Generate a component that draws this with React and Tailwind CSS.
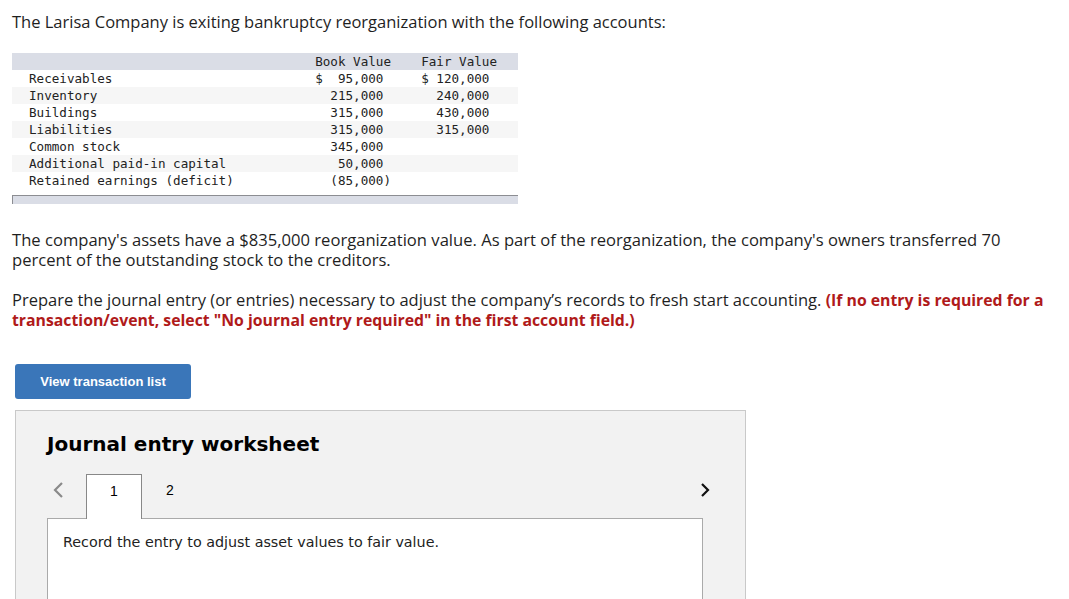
import React from "react";

const rows = [
  { label: "Receivables", book: "$  95,000 ", fair: "$ 120,000 " },
  { label: "Inventory", book: "215,000 ", fair: "240,000 " },
  { label: "Buildings", book: "315,000 ", fair: "430,000 " },
  { label: "Liabilities", book: "315,000 ", fair: "315,000 " },
  { label: "Common stock", book: "345,000 ", fair: "" },
  { label: "Additional paid-in capital", book: "50,000 ", fair: "" },
  { label: "Retained earnings (deficit)", book: "(85,000)", fair: "" },
];

const mono = { fontFamily: '"DejaVu Sans Mono", "Liberation Mono", monospace' };

export default function App() {
  return (
    <div
      className="w-[1069px] h-[599px] overflow-hidden bg-white text-[#222]"
      style={{ fontFamily: '"Open Sans", Lato, sans-serif' }}
    >
      <div className="pl-3 pt-[12px]">
        <p className="text-[16.5px] leading-[20px] text-[#1f1f1f] whitespace-nowrap">
          The Larisa Company is exiting bankruptcy reorganization with the following accounts:
        </p>

        {/* Table */}
        <div className="mt-[21px] w-[506px] text-[12.6px] text-[#222]" style={mono}>
          <div className="h-[17px] bg-[#dadde6] grid grid-cols-[288px_91px_106px] items-center leading-[17px]">
            <span />
            <span className="text-right whitespace-pre">Book Value</span>
            <span className="text-right whitespace-pre">Fair Value</span>
          </div>
          {rows.map((r, i) => (
            <div
              key={r.label}
              className={`h-[17px] grid grid-cols-[288px_91px_106px] items-center leading-[17px] ${
                i % 2 === 1 ? "bg-[#f6f6f6]" : "bg-white"
              }`}
            >
              <span className="pl-[17px] whitespace-pre">{r.label}</span>
              <span className="text-right whitespace-pre">{r.book}</span>
              <span className="text-right whitespace-pre">{r.fair}</span>
            </div>
          ))}
          <div className="mt-[6px] h-[9px] bg-[#dadde6] border-t border-l border-[#8c8d92]" />
        </div>

        <div className="mt-[26px] w-[1050px] text-[16.6px] leading-[20px] text-[#1f1f1f] whitespace-nowrap">
          <div className="h-[20px]">
            The company's assets have a $835,000 reorganization value. As part of the reorganization, the company's owners transferred 70
          </div>
          <div className="h-[20px]">percent of the outstanding stock to the creditors.</div>
        </div>
        <div className="mt-[20px] w-[1050px] text-[16.5px] leading-[20px] text-[#1f1f1f] whitespace-nowrap">
          <div className="h-[20px]">
            Prepare the journal entry (or entries) necessary to adjust the company’s records to fresh start accounting.{" "}
            <b className="text-[#b01a1a] font-bold text-[15.8px]">(If no entry is required for a</b>
          </div>
          <div className="h-[20px]">
            <b className="text-[#b01a1a] font-bold text-[15.8px]">
              transaction/event, select "No journal entry required" in the first account field.)
            </b>
          </div>
        </div>
      </div>

      <div className="pl-[15px]">
        <button
          className="mt-[34px] w-[176px] h-[35px] rounded-[3px] bg-[#3a76b9] text-white text-[13px] font-bold"
          style={{ fontFamily: '"Liberation Sans", Arial, sans-serif' }}
        >
          View transaction list
        </button>

        <div
          className="mt-[11px] w-[731px] h-[200px] bg-[#f2f2f2] border border-[#c9c9c9] pl-[31px] pr-[42px]"
          style={{ fontFamily: '"DejaVu Sans", Verdana, sans-serif' }}
        >
          <h2 className="mt-[20px] text-[20px] leading-[26px] font-bold text-black">Journal entry worksheet</h2>
          <div className="mt-[16px] flex items-end h-[45px]">
            <div className="w-[39px] h-[44px] flex items-start pt-[7px] pl-[5px]">
              <svg width="12" height="18" viewBox="0 0 12 18">
                <path d="M10 2 L3 9 L10 16" fill="none" stroke="#8a8a8a" strokeWidth="2.2" />
              </svg>
            </div>
            <div
              className="w-[56px] h-[45px] bg-white border border-b-0 border-[#888] flex justify-center pt-[7px] text-[14px] leading-[18px] text-black relative z-10 -mb-px"
              style={{ fontFamily: '"Liberation Sans", Arial, sans-serif' }}
            >
              1
            </div>
            <div
              className="w-[56px] h-[44px] flex justify-center pt-[7px] text-[14px] leading-[18px] text-black"
              style={{ fontFamily: '"Liberation Sans", Arial, sans-serif' }}
            >
              2
            </div>
            <div className="flex-1 h-[44px] flex items-start pt-[7px] justify-end -mr-[8px]">
              <svg width="12" height="18" viewBox="0 0 12 18">
                <path d="M3 3 L9 9 L3 15" fill="none" stroke="#111" strokeWidth="2.2" />
              </svg>
            </div>
          </div>
          <div className="h-[120px] bg-white border border-[#aaa] pl-[15px] pt-[13px]">
            <p className="text-[14.3px] leading-[20px] text-[#222]">
              Record the entry to adjust asset values to fair value.
            </p>
          </div>
        </div>
      </div>
    </div>
  );
}
